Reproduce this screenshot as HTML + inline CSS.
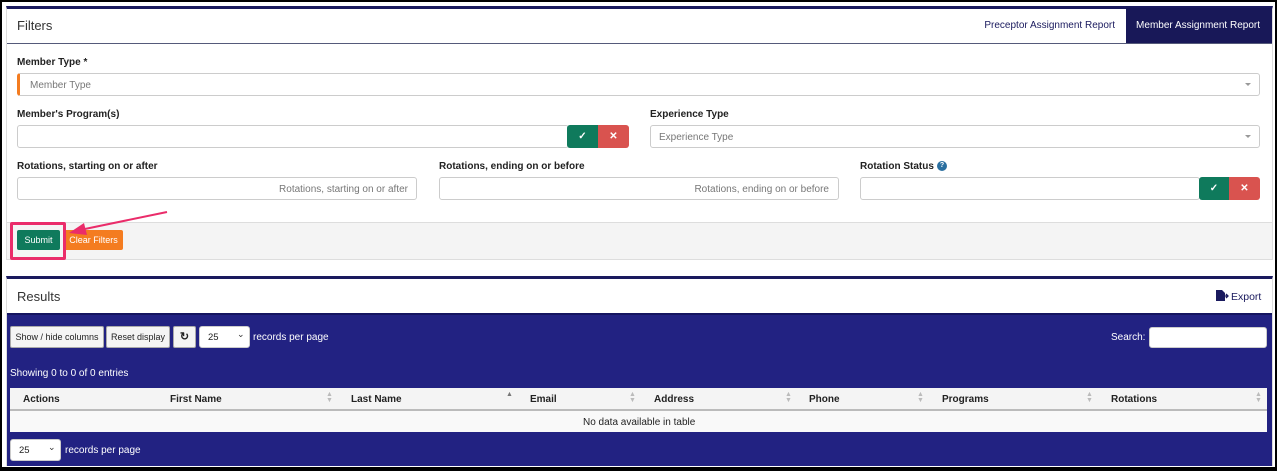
<!DOCTYPE html>
<html><head><style>
*{box-sizing:border-box;margin:0;padding:0}
body{width:1277px;height:471px;background:#000;position:relative;overflow:hidden;font-family:"Liberation Sans",Arial,sans-serif;font-size:10px;color:#222}
.a{position:absolute;white-space:nowrap}
.t{transform:translateY(1px)}
.inner{left:2px;top:2px;width:1273px;height:465px;background:#fff}
.lbl{font-weight:bold;font-size:10px;color:#222}
.inp{border:1px solid #ccc;border-radius:3px;background:#fff}
.ph{color:#777;font-size:10px}
.g{background:#0f7a5c;border-radius:3px 0 0 3px;color:#fff;text-align:center;font-weight:bold}
.r{background:#d9534f;border-radius:0 3px 3px 0;color:#fff;text-align:center;font-weight:bold}
.caret{width:0;height:0;border-left:3px solid transparent;border-right:3px solid transparent;border-top:3px solid #999}
.btn{background:#f4f4f4;border:1px solid #aaa;border-radius:2px;font-size:9px;color:#222;text-align:center;line-height:20px}
.th{font-weight:bold;font-size:10px;top:394px}
.sort{color:#bbb;font-size:7px;top:392px;line-height:6px}
</style></head><body>
<div class="a inner"></div>
<div class="a" style="left:6px;top:6px;width:1267px;height:254px;border:1px solid #ddd;border-top:3px solid #1a1a5e;background:#fff"></div>
<div class="a" style="left:17px;top:18px;font-size:13px;color:#333">Filters</div>
<div class="a" style="left:7px;top:43px;width:1265px;height:1px;background:#555a7a"></div>
<div class="a" style="left:1126px;top:8px;width:146px;height:35px;background:#181858"></div>
<div class="a" style="right:162px;top:20px;font-size:10px;color:#1a1a5e">Preceptor Assignment Report</div>
<div class="a" style="right:17px;top:20px;font-size:10px;color:#fff">Member Assignment Report</div>

<div class="a lbl" style="left:17px;top:57px">Member Type *</div>
<div class="a inp" style="left:17px;top:73px;width:1243px;height:23px;border-left:3px solid #f47c20"></div>
<div class="a ph" style="left:30px;top:80px">Member Type</div>
<div class="a caret" style="left:1245px;top:83px"></div>

<div class="a lbl" style="left:17px;top:109px">Member's Program(s)</div>
<div class="a inp" style="left:17px;top:125px;width:552px;height:23px"></div>
<div class="a g" style="left:567px;top:125px;width:31px;height:23px;line-height:23px">✓</div>
<div class="a r" style="left:598px;top:125px;width:31px;height:23px;line-height:23px">✕</div>

<div class="a lbl" style="left:650px;top:109px">Experience Type</div>
<div class="a inp" style="left:650px;top:125px;width:610px;height:23px"></div>
<div class="a ph" style="left:659px;top:132px">Experience Type</div>
<div class="a caret" style="left:1245px;top:135px"></div>

<div class="a lbl" style="left:17px;top:161px">Rotations, starting on or after</div>
<div class="a inp" style="left:17px;top:177px;width:400px;height:23px"></div>
<div class="a ph" style="right:869px;top:184px">Rotations, starting on or after</div>
<div class="a lbl" style="left:439px;top:161px">Rotations, ending on or before</div>
<div class="a inp" style="left:439px;top:177px;width:400px;height:23px"></div>
<div class="a ph" style="right:448px;top:184px">Rotations, ending on or before</div>
<div class="a lbl" style="left:860px;top:161px">Rotation Status</div>
<div class="a" style="left:937px;top:161px;width:10px;height:10px;border-radius:50%;background:#2a6fa0;color:#fff;font-size:7px;text-align:center;line-height:10px;font-weight:bold">?</div>
<div class="a inp" style="left:860px;top:177px;width:340px;height:23px"></div>
<div class="a g" style="left:1199px;top:177px;width:30px;height:23px;line-height:23px">✓</div>
<div class="a r" style="left:1229px;top:177px;width:31px;height:23px;line-height:23px">✕</div>

<div class="a" style="left:7px;top:222px;width:1265px;height:37px;background:#f4f4f4;border-top:1px solid #ddd"></div>
<div class="a" style="left:17px;top:230px;width:43px;height:20px;background:#0f7a5c;border-radius:2px;color:#fff;font-size:9px;text-align:center;line-height:20px">Submit</div>
<div class="a" style="left:64px;top:230px;width:59px;height:20px;background:#f47c20;border-radius:2px;color:#fff;font-size:9px;text-align:center;line-height:20px">Clear Filters</div>
<div class="a" style="left:10px;top:222px;width:56px;height:38px;border:3px solid #ea2c6a;border-radius:2px"></div>
<svg class="a" style="left:0;top:0" width="1277" height="471"><line x1="167" y1="212" x2="80" y2="230" stroke="#ea2c6a" stroke-width="2"/><polygon points="69,233 84,223 87,235" fill="#ea2c6a"/></svg>

<div class="a" style="left:6px;top:276px;width:1267px;height:190px;border:1px solid #ddd;border-top:3px solid #1a1a5e;background:#fff"></div>
<div class="a" style="left:17px;top:289px;font-size:13px;color:#333">Results</div>
<svg class="a" style="left:1216px;top:290px" width="13" height="12"><path d="M0 0H6L9 3V11H0Z" fill="#1a1a5e"/><path d="M8 6H12M10 4L12 6L10 8" stroke="#1a1a5e" stroke-width="1.3" fill="none"/></svg>
<div class="a" style="left:1231px;top:291px;font-size:10.5px;color:#1a1a5e">Export</div>
<div class="a" style="left:7px;top:313px;width:1265px;height:153px;background:#222282;border-top:2px solid #151560"></div>
<div class="a btn" style="left:10px;top:326px;width:94px;height:22px">Show / hide columns</div>
<div class="a btn" style="left:106px;top:326px;width:64px;height:22px">Reset display</div>
<div class="a btn" style="left:173px;top:326px;width:23px;height:22px;font-weight:bold;font-size:11px">↻</div>
<div class="a inp" style="left:199px;top:326px;width:51px;height:22px"></div>
<div class="a" style="left:208px;top:332px;font-size:9.5px">25</div>
<div class="a" style="left:237px;top:329px;font-size:9px;color:#333">⌄</div>
<div class="a" style="left:253px;top:332px;color:#fff;font-size:10px">records per page</div>
<div class="a" style="left:1111px;top:332px;color:#fff;font-size:10px">Search:</div>
<div class="a inp" style="left:1149px;top:327px;width:118px;height:21px"></div>
<div class="a" style="left:10px;top:368px;color:#fff;font-size:10px">Showing 0 to 0 of 0 entries</div>
<div class="a" style="left:10px;top:388px;width:1257px;height:23px;background:#f4f4f4;border-bottom:2px solid #bbb"></div>
<div class="a" style="left:10px;top:411px;width:1257px;height:21px;background:#f9f9f9"></div>
<div class="a th" style="left:23px">Actions</div>
<div class="a th" style="left:170px">First Name</div>
<div class="a th" style="left:351px">Last Name</div>
<div class="a th" style="left:530px">Email</div>
<div class="a th" style="left:654px">Address</div>
<div class="a th" style="left:809px">Phone</div>
<div class="a th" style="left:942px">Programs</div>
<div class="a th" style="left:1111px">Rotations</div>
<div class="a sort" style="left:326px">▲<br>▼</div>
<div class="a sort" style="left:506px;color:#777">▲</div>
<div class="a sort" style="left:629px">▲<br>▼</div>
<div class="a sort" style="left:785px">▲<br>▼</div>
<div class="a sort" style="left:917px">▲<br>▼</div>
<div class="a sort" style="left:1086px">▲<br>▼</div>
<div class="a sort" style="left:1255px">▲<br>▼</div>
<div class="a" style="left:583px;top:417px;font-size:10px">No data available in table</div>
<div class="a inp" style="left:10px;top:439px;width:51px;height:22px"></div>
<div class="a" style="left:19px;top:445px;font-size:9.5px">25</div>
<div class="a" style="left:48px;top:442px;font-size:9px;color:#333">⌄</div>
<div class="a" style="left:65px;top:445px;color:#fff;font-size:10px">records per page</div>
</body></html>
